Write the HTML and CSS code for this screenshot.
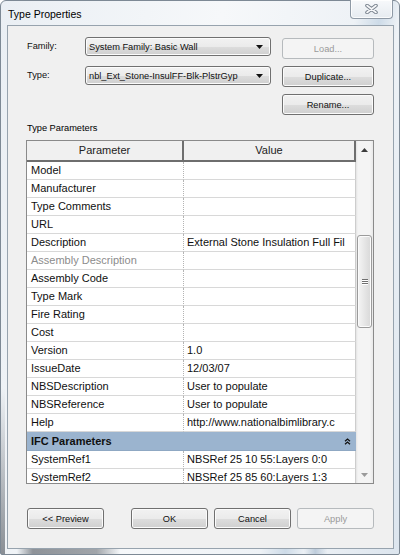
FILE: index.html
```html
<!DOCTYPE html>
<html lang="en">
<head>
    <meta charset="UTF-8">
    <title>Type Properties</title>
    <link rel="stylesheet" href="styles.css">
</head>
<body>
    <div class="window">
        <div class="titlebar">
            <span class="title">Type Properties</span>
            <div class="close-btn">
                <svg width="13" height="10" viewBox="0 0 13 10">
                    <path d="M2 1.5 L11 8.5 M11 1.5 L2 8.5" stroke="#7b8590" stroke-width="3.6" stroke-linecap="round" fill="none"/>
                    <path d="M2 1.5 L11 8.5 M11 1.5 L2 8.5" stroke="#f7f8fa" stroke-width="1.6" stroke-linecap="round" fill="none"/>
                </svg>
            </div>
        </div>

        <div class="client">
            <div class="top-form">
                <div class="fields">
                    <label class="field-label">Family:</label>
                    <div class="combo">
                        <span>System Family: Basic Wall</span>
                        <svg width="7" height="4" viewBox="0 0 7 4"><path d="M0 0 H7 L3.5 4 Z" fill="#111"/></svg>
                    </div>
                    <label class="field-label">Type:</label>
                    <div class="combo">
                        <span>nbl_Ext_Stone-InsulFF-Blk-PlstrGyp</span>
                        <svg width="7" height="4" viewBox="0 0 7 4"><path d="M0 0 H7 L3.5 4 Z" fill="#111"/></svg>
                    </div>
                </div>
                <div class="side-buttons">
                    <button class="btn" disabled>Load...</button>
                    <button class="btn">Duplicate...</button>
                    <button class="btn">Rename...</button>
                </div>
            </div>

            <div class="section-label">Type Parameters</div>

            <div class="grid-box">
                <div class="grid-rows">
                    <div class="row head">
                        <div class="cell param">Parameter</div>
                        <div class="cell value">Value</div>
                    </div>
                    <div class="row"><div class="cell param">Model</div><div class="cell value"></div></div>
                    <div class="row"><div class="cell param">Manufacturer</div><div class="cell value"></div></div>
                    <div class="row"><div class="cell param">Type Comments</div><div class="cell value"></div></div>
                    <div class="row"><div class="cell param">URL</div><div class="cell value"></div></div>
                    <div class="row"><div class="cell param">Description</div><div class="cell value">External Stone Insulation Full Fil</div></div>
                    <div class="row"><div class="cell param muted">Assembly Description</div><div class="cell value"></div></div>
                    <div class="row"><div class="cell param">Assembly Code</div><div class="cell value"></div></div>
                    <div class="row"><div class="cell param">Type Mark</div><div class="cell value"></div></div>
                    <div class="row"><div class="cell param">Fire Rating</div><div class="cell value"></div></div>
                    <div class="row"><div class="cell param">Cost</div><div class="cell value"></div></div>
                    <div class="row"><div class="cell param">Version</div><div class="cell value">1.0</div></div>
                    <div class="row"><div class="cell param">IssueDate</div><div class="cell value">12/03/07</div></div>
                    <div class="row"><div class="cell param">NBSDescription</div><div class="cell value">User to populate</div></div>
                    <div class="row"><div class="cell param">NBSReference</div><div class="cell value">User to populate</div></div>
                    <div class="row"><div class="cell param">Help</div><div class="cell value">http://www.nationalbimlibrary.c</div></div>
                    <div class="row group">
                        <span>IFC Parameters</span>
                        <svg width="7" height="7" viewBox="0 0 7 7">
                            <path d="M1 3.2 L3.5 1 L6 3.2 M1 6.2 L3.5 4 L6 6.2" stroke="#111" stroke-width="1.3" fill="none"/>
                        </svg>
                    </div>
                    <div class="row"><div class="cell param">SystemRef1</div><div class="cell value">NBSRef 25 10 55:Layers 0:0</div></div>
                    <div class="row"><div class="cell param">SystemRef2</div><div class="cell value">NBSRef 25 85 60:Layers 1:3</div></div>
                </div>
                <div class="vscroll">
                    <div class="arrow-btn">
                        <svg width="7" height="4" viewBox="0 0 7 4"><path d="M0 4 H7 L3.5 0 Z" fill="#3c3c3c"/></svg>
                    </div>
                    <div class="track">
                        <div class="thumb">
                            <span class="grip"></span><span class="grip"></span><span class="grip"></span>
                        </div>
                    </div>
                    <div class="arrow-btn">
                        <svg width="7" height="4" viewBox="0 0 7 4"><path d="M0 0 H7 L3.5 4 Z" fill="#9a9a9a"/></svg>
                    </div>
                </div>
            </div>

            <div class="footer">
                <button class="btn preview">&lt;&lt; Preview</button>
                <div class="footer-group">
                    <button class="btn">OK</button>
                    <button class="btn">Cancel</button>
                    <button class="btn" disabled>Apply</button>
                </div>
            </div>
        </div>
    </div>
</body>
</html>
```

FILE: styles.css
```css
:root {
    --dialog-bg: #f0f0f0;
    --text: #101010;
    --disabled: #9a9a9a;
    --row-line: #d8d8d8;
}

body {
    margin: 0;
    font-family: 'Liberation Sans', Arial, sans-serif;
    color: var(--text);
    background: #ffffff;
}

/* window frame (aero glass look) */
.window {
    width: 400px;
    height: 555px;
    box-sizing: border-box;
    border: 1px solid #7d8995;
    border-radius: 6px 6px 2px 2px;
    padding: 0 5px 5px 6px;
    display: flex;
    flex-direction: column;
    background:
        linear-gradient(to bottom, rgba(70, 76, 84, 0) 70%, rgba(70, 76, 84, 0.6) 100%) 0 0 / 4px 100% no-repeat,
        linear-gradient(to right, rgba(60, 66, 74, 0) 4%, rgba(60, 66, 74, 0.55) 8%, rgba(60, 66, 74, 0.45) 24%, rgba(60, 66, 74, 0) 30%, rgba(60, 66, 74, 0) 76%, rgba(120, 150, 180, 0.4) 79%, rgba(60, 66, 74, 0) 82%) 0 100% / 100% 5px no-repeat,
        linear-gradient(100deg, #eaeff4 0%, #f6f8fa 45%, #eef2f6 72%, #cddbe8 77%, #eef2f6 81%, #dce5ee 100%);
}

.titlebar {
    height: 24px;
    display: flex;
    justify-content: space-between;
    align-items: flex-start;
}

.title {
    padding: 7px 0 0 1px;
    font-size: 10.5px;
    line-height: 13px;
    color: #000;
}

.close-btn {
    width: 43px;
    height: 19px;
    box-sizing: border-box;
    margin: -1px 1px 0 0;
    border: 1px solid #8f9aa6;
    border-top: none;
    border-radius: 0 0 4px 4px;
    background: linear-gradient(#f7f9fb, #e6ebf0);
    box-shadow: inset 0 0 0 1px rgba(255, 255, 255, 0.8);
    display: flex;
    align-items: center;
    justify-content: center;
}

.client {
    flex: 1;
    box-sizing: border-box;
    border: 1px solid #97a3ae;
    background: var(--dialog-bg);
    padding: 0 19px 18px 18px;
    display: flex;
    flex-direction: column;
    font-size: 9.25px;
}

/* family / type pickers */
.top-form {
    display: flex;
    justify-content: space-between;
}

.fields {
    padding-top: 11px;
    display: grid;
    grid-template-columns: 59px 186px;
    row-gap: 10px;
    align-content: start;
}

.field-label {
    padding-left: 1px;
    line-height: 19px;
}

.combo {
    height: 19px;
    box-sizing: border-box;
    border: 1px solid #707070;
    border-radius: 3px;
    background: linear-gradient(#f2f2f2 0%, #ebebeb 50%, #dddddd 51%, #cfcfcf 100%);
    box-shadow: inset 0 0 0 1px #fcfcfc;
    padding: 0 7px 0 3px;
    display: flex;
    align-items: center;
    justify-content: space-between;
    white-space: nowrap;
}

.side-buttons {
    width: 92px;
    padding-top: 12px;
    display: flex;
    flex-direction: column;
    gap: 7px;
}

.btn {
    height: 21px;
    box-sizing: border-box;
    font-family: inherit;
    font-size: 9.25px;
    color: var(--text);
    border: 1px solid #707070;
    border-radius: 3px;
    background: linear-gradient(#f2f2f2 0%, #ebebeb 50%, #dddddd 51%, #cfcfcf 100%);
    box-shadow: inset 0 0 0 1px #fbfbfb;
    padding: 0;
}

.btn:disabled {
    color: var(--disabled);
    border-color: #b6babd;
    background: #f4f4f4;
    box-shadow: none;
}

.section-label {
    margin: 7px 0 5px 1px;
    line-height: 13px;
    color: #000;
}

/* parameter grid */
.grid-box {
    height: 344px;
    box-sizing: border-box;
    border: 1px solid #8a8a8a;
    display: flex;
    background: #fff;
}

.grid-rows {
    width: 329px;
    overflow: hidden;
    font-size: 11px;
}

.row {
    display: grid;
    grid-template-columns: 157px 172px;
    height: 18px;
}

.cell {
    box-sizing: border-box;
    border-bottom: 1px solid var(--row-line);
    line-height: 17px;
    white-space: nowrap;
    overflow: hidden;
}

.cell.param {
    padding-left: 4px;
    border-right: 1px dotted #b4b4b4;
}

.cell.value {
    padding-left: 3px;
    border-right: 1px solid #cdcdcd;
}

.cell.muted {
    color: #8c8c8c;
}

.row.head {
    height: 21px;
}

.row.head .cell {
    background: #f0f0f0;
    text-align: center;
    line-height: 19px;
    padding: 0;
    border-bottom: 2px solid #6e6e6e;
    border-right: 2px solid #6e6e6e;
    color: #222;
}

.row.group {
    display: flex;
    height: 19px;
    justify-content: space-between;
    align-items: center;
    padding: 0 5px 0 4px;
    background: #9bb4cf;
    font-weight: bold;
    border-bottom: 1px solid #8fa8c3;
    box-sizing: border-box;
    width: 329px;
}

/* scrollbar */
.vscroll {
    width: 17px;
    display: flex;
    flex-direction: column;
    background: linear-gradient(to right, #e3e3e3 0, #f4f4f4 2px, #f4f4f4 14px, #e9e9e9 100%);
}

.arrow-btn {
    height: 17px;
    display: flex;
    align-items: center;
    justify-content: center;
}

.track {
    flex: 1;
}

.thumb {
    margin: 77px 1px 0 1px;
    height: 93px;
    box-sizing: border-box;
    border: 1px solid #9b9b9b;
    border-radius: 3px;
    background: linear-gradient(to right, #f5f5f5, #e6e6e6 50%, #d8d8d8);
    box-shadow: inset 0 0 0 1px #fbfbfb;
    display: flex;
    flex-direction: column;
    align-items: center;
    justify-content: center;
    gap: 1px;
}

.grip {
    width: 6px;
    height: 1px;
    background: #6f6f6f;
    box-shadow: 0 1px 0 #ffffff;
}

/* bottom buttons */
.footer {
    margin-top: 24px;
    display: flex;
    justify-content: space-between;
}

.footer .btn {
    width: 77px;
}

.footer .preview {
    margin-left: 1px;
}

.footer-group {
    display: flex;
    gap: 6px;
}
```
